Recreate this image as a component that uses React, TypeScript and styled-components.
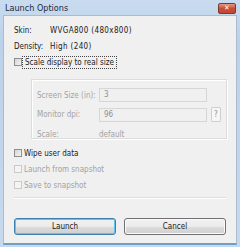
import * as React from 'react';
import styled, { createGlobalStyle } from 'styled-components';

const Global = createGlobalStyle`
  html, body {
    margin: 0;
    padding: 0;
    background: #ffffff;
  }
`;

const Window = styled.div`
  width: 240px;
  height: 248px;
  box-sizing: border-box;
  display: flex;
  flex-direction: column;
  background: linear-gradient(#c9dcef, #bcd2ea 40px, #c7d9ec);
  padding: 0 3px 2px 3px;
  border-bottom: 1px solid #ffffff;
  font-family: "DejaVu Sans Condensed", "DejaVu Sans", sans-serif;
  font-stretch: condensed;
  font-size: 8px;
  color: #1a1a1a;
`;

const TitleBar = styled.div`
  height: 15px;
  display: flex;
  align-items: center;
  justify-content: space-between;
  flex-shrink: 0;
`;

const Title = styled.span`
  font-size: 9px;
  color: #1f2a3a;
  padding-left: 2px;
  padding-top: 1px;
`;

const CloseButton = styled.div`
  width: 16px;
  height: 9px;
  margin-top: 2px;
  margin-right: 1px;
  border-radius: 2px;
  border: 1px solid #7a3a33;
  background: linear-gradient(#e49a86, #c7503a 50%, #c04630);
  display: flex;
  align-items: center;
  justify-content: center;
  color: #ffffff;
  font-size: 7px;
  font-weight: bold;
  line-height: 1;
`;

const Body = styled.div`
  flex: 1;
  background: #f0f0f0;
  border: 1px solid #a9bcd0;
  border-bottom: 2px solid #6d9fc8;
  padding: 6px 9px 0 10px;
  display: flex;
  flex-direction: column;
`;

const InfoRow = styled.div`
  display: flex;
  align-items: center;
  height: 16px;
`;

const InfoLabel = styled.span`
  width: 36px;
  flex-shrink: 0;
`;

const InfoValue = styled.span`
  letter-spacing: 0.35px;
`;

const Gap = styled.div<{ h: number }>`
  height: ${p => p.h}px;
  flex-shrink: 0;
`;

const CheckRow = styled.div<{ disabled?: boolean }>`
  display: flex;
  align-items: center;
  height: 16px;
  color: ${p => (p.disabled ? '#a3a3a3' : '#1a1a1a')};
`;

const Box = styled.span<{ disabled?: boolean }>`
  width: 8px;
  height: 8px;
  box-sizing: border-box;
  border: 1px solid ${p => (p.disabled ? '#cacaca' : '#8e8f8f')};
  background: ${p =>
    p.disabled ? '#f4f4f4' : 'linear-gradient(135deg, #d4d4d4, #f4f4f4)'};
  margin-right: 2px;
  flex-shrink: 0;
`;

const FocusText = styled.span`
  outline: 1px dotted #444;
  outline-offset: 1px;
  padding: 0 1px;
`;

const Group = styled.div`
  margin: 9px 0 0 17px;
  width: 196px;
  height: 60px;
  box-sizing: border-box;
  border: 1px solid #dcdcdc;
  box-shadow: inset 1px 1px 0 #ffffff, 1px 1px 0 #ffffff;
  padding: 8px 0 0 5px;
  display: grid;
  grid-template-columns: 62px 108px 14px;
  grid-template-rows: 14px 15px 14px;
  row-gap: 5px;
  align-items: center;
  color: #a3a3a3;
`;

const Input = styled.div`
  height: 14px;
  box-sizing: border-box;
  border: 1px solid #d6d6d6;
  background: #f0f0f0;
  padding-left: 4px;
  line-height: 12px;
  color: #8f8f8f;
`;

const HelpButton = styled.div`
  width: 10px;
  height: 15px;
  margin-left: 4px;
  box-sizing: border-box;
  border: 1px solid #cfcfcf;
  border-radius: 1px;
  background: #f6f6f6;
  color: #8f8f8f;
  font-size: 8px;
  display: flex;
  align-items: center;
  justify-content: center;
`;

const Separator = styled.div`
  height: 1px;
  background: #d5dfe5;
  border-bottom: 1px solid #ffffff;
  margin-right: 1px;
`;

const ButtonRow = styled.div`
  display: flex;
  gap: 8px;
  margin-top: 19px;
`;

const Button = styled.div<{ primary?: boolean }>`
  width: 102px;
  height: 17px;
  box-sizing: border-box;
  border-radius: 3px;
  border: 1px solid ${p => (p.primary ? '#3c7fb1' : '#707070')};
  box-shadow: ${p =>
    p.primary ? 'inset 0 0 0 1px #60c4ec' : 'inset 0 0 0 1px #fbfbfb'};
  background: linear-gradient(#f2f2f2, #ebebeb 50%, #dddddd 51%, #cfcfcf);
  display: flex;
  align-items: center;
  justify-content: center;
  color: #1a1a1a;
`;

export default function App() {
  return (
    <>
      <Global />
      <Window>
        <TitleBar>
          <Title>Launch Options</Title>
          <CloseButton>✕</CloseButton>
        </TitleBar>
        <Body>
          <InfoRow>
            <InfoLabel>Skin:</InfoLabel>
            <InfoValue>WVGA800 (480x800)</InfoValue>
          </InfoRow>
          <InfoRow>
            <InfoLabel>Density:</InfoLabel>
            <InfoValue>High (240)</InfoValue>
          </InfoRow>
          <CheckRow>
            <Box />
            <FocusText>Scale display to real size</FocusText>
          </CheckRow>
          <Group>
            <span>Screen Size (in):</span>
            <Input>3</Input>
            <span />
            <span>Monitor dpi:</span>
            <Input>96</Input>
            <HelpButton>?</HelpButton>
            <span>Scale:</span>
            <span>default</span>
            <span />
          </Group>
          <Gap h={6} />
          <CheckRow>
            <Box />
            <span>Wipe user data</span>
          </CheckRow>
          <CheckRow disabled>
            <Box disabled />
            <span>Launch from snapshot</span>
          </CheckRow>
          <CheckRow disabled>
            <Box disabled />
            <span>Save to snapshot</span>
          </CheckRow>
          <Gap h={4} />
          <Separator />
          <ButtonRow>
            <Button primary>Launch</Button>
            <Button>Cancel</Button>
          </ButtonRow>
        </Body>
      </Window>
    </>
  );
}
